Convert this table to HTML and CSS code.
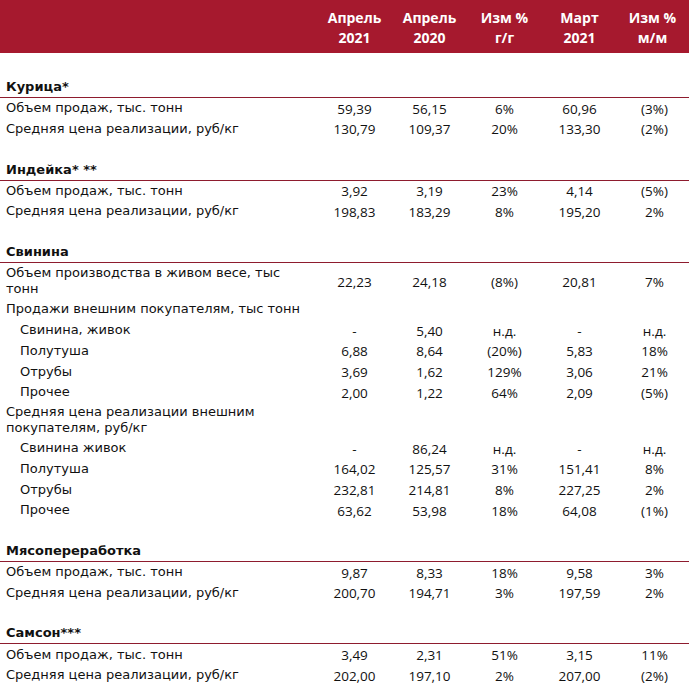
FILE: index.html
```html
<!DOCTYPE html>
<html lang="ru">
<head>
<meta charset="utf-8">
<title>Операционные результаты</title>
<link rel="stylesheet" href="styles.css">
</head>
<body>
<div class="sheet">
  <div class="row head">
    <div class="label"></div>
    <div class="hcell">Апрель<br>2021</div>
    <div class="hcell">Апрель<br>2020</div>
    <div class="hcell">Изм %<br>г/г</div>
    <div class="hcell">Март<br>2021</div>
    <div class="hcell last">Изм %<br>м/м</div>
  </div>
  <div class="gap-top"></div>

  <div class="row sec"><div class="label">Курица*</div></div>
  <div class="row"><div class="label">Объем продаж, тыс. тонн</div><div class="v">59,39</div><div class="v">56,15</div><div class="v">6%</div><div class="v">60,96</div><div class="v last">(3%)</div></div>
  <div class="row"><div class="label">Средняя цена реализации, руб/кг</div><div class="v">130,79</div><div class="v">109,37</div><div class="v">20%</div><div class="v">133,30</div><div class="v last">(2%)</div></div>
  <div class="blank"></div>

  <div class="row sec"><div class="label">Индейка* **</div></div>
  <div class="row"><div class="label">Объем продаж, тыс. тонн</div><div class="v">3,92</div><div class="v">3,19</div><div class="v">23%</div><div class="v">4,14</div><div class="v last">(5%)</div></div>
  <div class="row"><div class="label">Средняя цена реализации, руб/кг</div><div class="v">198,83</div><div class="v">183,29</div><div class="v">8%</div><div class="v">195,20</div><div class="v last">2%</div></div>
  <div class="blank"></div>

  <div class="row sec"><div class="label">Свинина</div></div>
  <div class="row tall"><div class="label">Объем производства в живом весе, тыс<br>тонн</div><div class="v">22,23</div><div class="v">24,18</div><div class="v">(8%)</div><div class="v">20,81</div><div class="v last">7%</div></div>
  <div class="row pork"><div class="label">Продажи внешним покупателям, тыс тонн</div></div>
  <div class="row pork"><div class="label sub">Свинина, живок</div><div class="v">-</div><div class="v">5,40</div><div class="v">н.д.</div><div class="v">-</div><div class="v last">н.д.</div></div>
  <div class="row pork"><div class="label sub">Полутуша</div><div class="v">6,88</div><div class="v">8,64</div><div class="v">(20%)</div><div class="v">5,83</div><div class="v last">18%</div></div>
  <div class="row pork"><div class="label sub">Отрубы</div><div class="v">3,69</div><div class="v">1,62</div><div class="v">129%</div><div class="v">3,06</div><div class="v last">21%</div></div>
  <div class="row pork"><div class="label sub">Прочее</div><div class="v">2,00</div><div class="v">1,22</div><div class="v">64%</div><div class="v">2,09</div><div class="v last">(5%)</div></div>
  <div class="row tall2"><div class="label">Средняя цена реализации внешним<br>покупателям, руб/кг</div></div>
  <div class="row pork"><div class="label sub">Свинина живок</div><div class="v">-</div><div class="v">86,24</div><div class="v">н.д.</div><div class="v">-</div><div class="v last">н.д.</div></div>
  <div class="row pork"><div class="label sub">Полутуша</div><div class="v">164,02</div><div class="v">125,57</div><div class="v">31%</div><div class="v">151,41</div><div class="v last">8%</div></div>
  <div class="row pork"><div class="label sub">Отрубы</div><div class="v">232,81</div><div class="v">214,81</div><div class="v">8%</div><div class="v">227,25</div><div class="v last">2%</div></div>
  <div class="row pork"><div class="label sub">Прочее</div><div class="v">63,62</div><div class="v">53,98</div><div class="v">18%</div><div class="v">64,08</div><div class="v last">(1%)</div></div>
  <div class="blank short"></div>

  <div class="row sec"><div class="label">Мясопереработка</div></div>
  <div class="row"><div class="label">Объем продаж, тыс. тонн</div><div class="v">9,87</div><div class="v">8,33</div><div class="v">18%</div><div class="v">9,58</div><div class="v last">3%</div></div>
  <div class="row"><div class="label">Средняя цена реализации, руб/кг</div><div class="v">200,70</div><div class="v">194,71</div><div class="v">3%</div><div class="v">197,59</div><div class="v last">2%</div></div>
  <div class="blank"></div>

  <div class="row sec"><div class="label">Самсон***</div></div>
  <div class="row"><div class="label">Объем продаж, тыс. тонн</div><div class="v">3,49</div><div class="v">2,31</div><div class="v">51%</div><div class="v">3,15</div><div class="v last">11%</div></div>
  <div class="row"><div class="label">Средняя цена реализации, руб/кг</div><div class="v">202,00</div><div class="v">197,10</div><div class="v">2%</div><div class="v">207,00</div><div class="v last">(2%)</div></div>
</div>
</body>
</html>
```

FILE: styles.css
```css
html, body {
  margin: 0;
  padding: 0;
  background: #ffffff;
}

.sheet {
  width: 689px;
  color: #111111;
}

.row {
  display: grid;
  grid-template-columns: 317px 75px 75px 75px 75px 72px;
  align-items: center;
  height: 20.5px;
  box-sizing: border-box;
}

.label {
  font-family: "DejaVu Sans", Verdana, sans-serif;
  font-size: 13px;
  line-height: 16px;
  padding-left: 6px;
  white-space: nowrap;
}

.label.sub {
  padding-left: 20px;
}

.v {
  font-family: "Open Sans", "Liberation Sans", sans-serif;
  font-size: 13.5px;
  line-height: 16px;
  text-align: center;
  padding-top: 1px;
}

.v.last {
  padding-left: 3px;
}

.head {
  height: 53px;
  background: #a6192e;
  color: #ffffff;
  padding-top: 3px;
}

.hcell {
  font-family: "Open Sans", "Liberation Sans", sans-serif;
  font-weight: 700;
  font-size: 14px;
  line-height: 20px;
  text-align: center;
}

.hcell.last {
  padding-left: 0;
  padding-right: 1px;
}

.gap-top {
  height: 24px;
}

.blank {
  height: 20.5px;
}

.blank.short {
  height: 20px;
}

.sec {
  height: 21px;
  border-bottom: 1px solid #8e1c2e;
}

.sec .label {
  font-weight: 700;
}

.pork {
  height: 20.75px;
}

.tall {
  height: 36px;
}

.tall2 {
  height: 35px;
}
```
